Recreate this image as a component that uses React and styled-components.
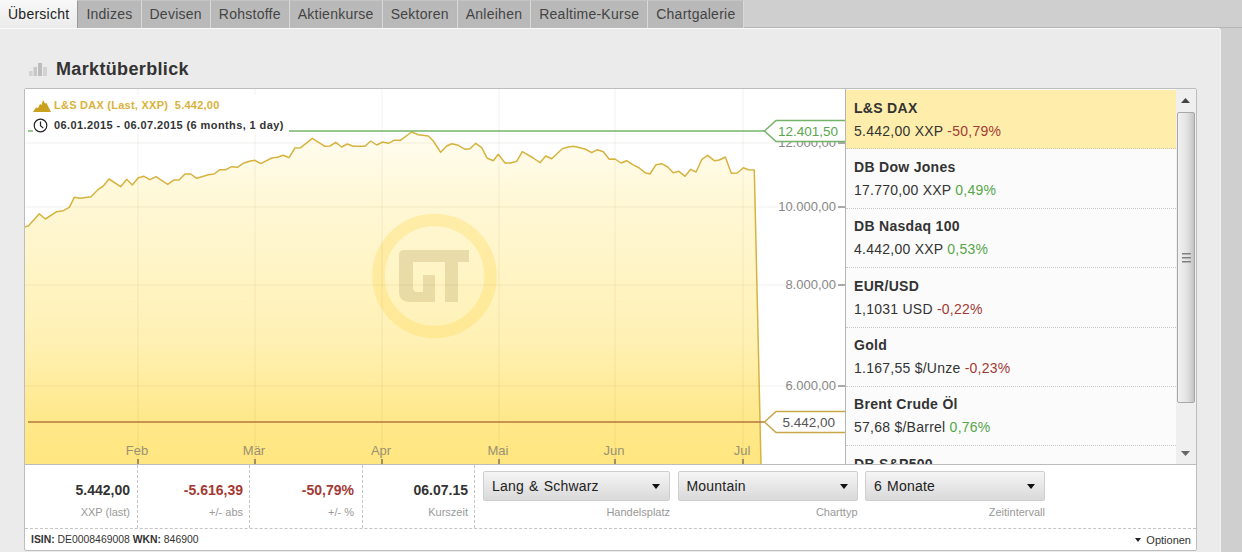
import React from "react";
import styled, { createGlobalStyle } from "styled-components";

const GlobalStyle = createGlobalStyle`
  html, body {
    margin: 0;
    height: 552px;
    overflow: hidden;
    background: #cfcfcf;
    font-family: "Liberation Sans", Arial, sans-serif;
  }
`;

const TABS = [
  "Übersicht",
  "Indizes",
  "Devisen",
  "Rohstoffe",
  "Aktienkurse",
  "Sektoren",
  "Anleihen",
  "Realtime-Kurse",
  "Chartgalerie",
];

const STATS = [
  { value: "5.442,00", label: "XXP (last)" },
  { value: "-5.616,39", label: "+/- abs", down: true },
  { value: "-50,79%", label: "+/- %", down: true },
  { value: "06.07.15", label: "Kurszeit" },
];

const SELECTS = [
  { value: "Lang & Schwarz", label: "Handelsplatz", width: 187 },
  { value: "Mountain", label: "Charttyp", width: 180 },
  { value: "6 Monate", label: "Zeitintervall", width: 180 },
];

const MARKETS = [
  { name: "L&S DAX", price: "5.442,00 XXP", change: "-50,79%", down: true, active: true },
  { name: "DB Dow Jones", price: "17.770,00 XXP", change: "0,49%" },
  { name: "DB Nasdaq 100", price: "4.442,00 XXP", change: "0,53%" },
  { name: "EUR/USD", price: "1,1031 USD", change: "-0,22%", down: true },
  { name: "Gold", price: "1.167,55 $/Unze", change: "-0,23%", down: true },
  { name: "Brent Crude Öl", price: "57,68 $/Barrel", change: "0,76%" },
  { name: "DB S&P500" },
];

const MONTHS = [
  { name: "Feb", x: 138 },
  { name: "Mär", x: 255 },
  { name: "Apr", x: 382 },
  { name: "Mai", x: 499 },
  { name: "Jun", x: 615 },
  { name: "Jul", x: 743 },
];

const LEVELS = [
  { name: "12.000,00", y: 143 },
  { name: "10.000,00", y: 207 },
  { name: "8.000,00", y: 285 },
  { name: "6.000,00", y: 386 },
];

// read off the reference, [x, y] in 3x crop units
const LEFT_CURVE = [
  [15, 320], [25, 318], [58, 281], [76, 297], [110, 275], [130, 272], [148, 262], [163, 232],
  [180, 235], [213, 230], [235, 208], [250, 198], [267, 177], [302, 200], [320, 178], [337, 195],
  [355, 173], [372, 169], [390, 179], [408, 170], [443, 193], [460, 181], [478, 179], [495, 162],
  [512, 162], [530, 175], [565, 164], [582, 162], [600, 149], [617, 149], [635, 140], [652, 142],
  [670, 130], [688, 124], [705, 121], [722, 131], [755, 114], [772, 112], [790, 106], [807, 113],
  [825, 84], [842, 83], [877, 55], [915, 79], [930, 78], [947, 67], [965, 81], [982, 72],
  [1000, 79], [1035, 79], [1052, 63], [1070, 75], [1088, 66], [1105, 70], [1122, 61], [1140, 61],
];
const RIGHT_CURVE = [
  [0, 62], [35, 36], [55, 44], [85, 48], [100, 63], [122, 97], [140, 78], [155, 71],
  [175, 76], [195, 88], [210, 86], [227, 70], [245, 83], [262, 115], [280, 122], [295, 103],
  [315, 129], [332, 129], [350, 124], [367, 95], [400, 114], [420, 128], [437, 108], [455, 116],
  [487, 86], [505, 81], [522, 79], [555, 87], [575, 98], [592, 89], [610, 95], [628, 118],
  [645, 117], [663, 129], [680, 122], [698, 134], [718, 144], [735, 158], [750, 162], [768, 134],
  [785, 131], [803, 141], [820, 158], [837, 154], [855, 169], [872, 148], [888, 156], [906, 118],
  [923, 106], [943, 122], [958, 120], [976, 111], [994, 160], [1012, 159], [1030, 143], [1045, 149],
  [1063, 150],
];

const round = (n) => Math.round(n * 10) / 10;
const curve = [
  [25, 226.7],
  ...LEFT_CURVE.map(([x, y]) => [round(20 + x / 3), round(120 + y / 3)]),
  ...RIGHT_CURVE.map(([x, y]) => [round(400 + x / 3), round(120 + y / 3)]),
  [761, 464],
]
  .map((p) => p.join(","))
  .join(" ");

const Chart = () => (
  <ChartSvg viewBox="25 89 820 375" width="820" height="375">
    <defs>
      <linearGradient id="mountainFill" x1="0" y1="131" x2="0" y2="464" gradientUnits="userSpaceOnUse">
        <stop offset="0" stopColor="#fffdf2" />
        <stop offset="0.19" stopColor="#fff8d8" />
        <stop offset="0.63" stopColor="#fff1b4" />
        <stop offset="0.87" stopColor="#ffe88a" />
        <stop offset="1" stopColor="#ffe680" />
      </linearGradient>
      <filter id="soft">
        <feGaussianBlur stdDeviation="0.6" />
      </filter>
    </defs>
    <polygon points={`${curve} 25,464`} fill="url(#mountainFill)" />

    <g filter="url(#soft)">
      <circle cx="434.5" cy="276" r="56" fill="none" stroke="#ffd95c" strokeOpacity="0.35" strokeWidth="12.5" />
      <path
        d="M404 250H469V262H458V302H445V262H413V287Q413 292 417 292H423V275H435V302H410Q399 302 399 291V255Q399 250 404 250Z"
        fill="#bfae6e"
        fillOpacity="0.34"
      />
    </g>

    {MONTHS.map((m) => (
      <GridLine key={m.name} x1={m.x} x2={m.x} y1="89" y2="464" />
    ))}
    {LEVELS.map((l) => (
      <GridLine key={l.name} x1="25" x2="838" y1={l.y} y2={l.y} />
    ))}

    <polyline points={curve} fill="none" stroke="#d6b33f" strokeWidth="1.5" strokeLinejoin="round" />

    {LEVELS.map((l) => (
      <g key={l.name}>
        <AxisText x="836" y={l.y + 4}>{l.name}</AxisText>
        <line x1="838" x2="845" y1={l.y} y2={l.y} stroke="#555" />
      </g>
    ))}
    {MONTHS.map((m) => (
      <g key={m.name}>
        <MonthText x={m.x - 1} y="455">{m.name}</MonthText>
        <line x1={m.x} x2={m.x} y1="459" y2="464" stroke="#444" />
      </g>
    ))}

    <line x1="28" x2="765" y1="131" y2="131" stroke="#74b36a" strokeWidth="1.5" />
    <path d="M845 120.5H776L764.5 131L776 141.5H845" fill="#fff" stroke="#74b36a" strokeWidth="1.5" />
    <TagText x="838" y="135.5" fill="#5aa64e">12.401,50</TagText>

    <line x1="28" x2="765" y1="422" y2="422" stroke="#b8763c" strokeWidth="1.5" />
    <path d="M845 411.5H776L764.5 422L776 432.5H845" fill="#fff" stroke="#c9a649" strokeWidth="1.5" />
    <TagText x="835" y="426.5" fill="#555">5.442,00</TagText>
  </ChartSvg>
);

const App = () => (
  <>
    <GlobalStyle />
    <Tabs>
      {TABS.map((tab, index) => (
        <Tab key={tab} $active={index === 0}>{tab}</Tab>
      ))}
    </Tabs>
    <Panel>
      <Heading>
        <svg width="18" height="14" viewBox="0 0 18 14">
          <rect x="0" y="9" width="3.5" height="5" fill="#d2d2d2" />
          <rect x="4.5" y="5" width="3.5" height="9" fill="#c8c8c8" />
          <rect x="9" y="1" width="4" height="13" fill="#bdbdbd" />
          <rect x="14" y="5" width="4" height="9" fill="#d2d2d2" />
        </svg>
        <Title>Marktüberblick</Title>
      </Heading>
      <Box>
        <TopRow>
          <ChartArea>
            <Chart />
            <Legend>
              <LegendRow $color="#d9b23a" $spacing={0.25}>
                <LegendIcon>
                  <svg width="18" height="13" viewBox="0 0 18 13">
                    <path d="M0 13L3 8.5L5 9L7 5L8.5 6L10 1L12 4.5L13.5 4L18 13Z" fill="#c9a11f" />
                  </svg>
                </LegendIcon>
                L&amp;S DAX (Last, XXP)&nbsp; 5.442,00
              </LegendRow>
              <LegendRow $color="#333" $spacing={0.4}>
                <LegendIcon>
                  <svg width="15" height="15" viewBox="0 0 15 15">
                    <circle cx="7.5" cy="7.5" r="6.3" fill="none" stroke="#222" strokeWidth="1.2" />
                    <path d="M7.5 3.5V7.8L10.3 10.1" fill="none" stroke="#222" strokeWidth="1.2" />
                  </svg>
                </LegendIcon>
                06.01.2015 - 06.07.2015 (6 months, 1 day)
              </LegendRow>
            </Legend>
          </ChartArea>
          <MarketList>
            {MARKETS.map((m) => (
              <Market key={m.name} $active={m.active}>
                <MarketName>{m.name}</MarketName>
                {m.price && (
                  <MarketPrice>
                    {m.price} <Change $down={m.down}>{m.change}</Change>
                  </MarketPrice>
                )}
              </Market>
            ))}
          </MarketList>
          <Scrollbar>
            <ScrollArrow>
              <svg width="9" height="5" viewBox="0 0 9 5"><path d="M4.5 0L9 5H0Z" fill="#444" /></svg>
            </ScrollArrow>
            <Thumb>
              <Grip />
              <Grip />
              <Grip />
            </Thumb>
            <ScrollArrow $bottom>
              <svg width="9" height="5" viewBox="0 0 9 5"><path d="M0 0H9L4.5 5Z" fill="#666" /></svg>
            </ScrollArrow>
          </Scrollbar>
        </TopRow>
        <StatsRow>
          {STATS.map((s) => (
            <Stat key={s.label}>
              <StatValue $down={s.down}>{s.value}</StatValue>
              <SmallLabel>{s.label}</SmallLabel>
            </Stat>
          ))}
          <Controls>
            {SELECTS.map((s) => (
              <Control key={s.label} $width={s.width}>
                <Select>
                  <span>{s.value}</span>
                  <Caret />
                </Select>
                <SmallLabel>{s.label}</SmallLabel>
              </Control>
            ))}
          </Controls>
        </StatsRow>
        <Footer>
          <Codes>
            <b>ISIN:</b> DE0008469008 <b>WKN:</b> 846900
          </Codes>
          <Options>
            <SmallCaret />
            <span>Optionen</span>
          </Options>
        </Footer>
      </Box>
    </Panel>
  </>
);

export default App;

const Tabs = styled.div`
  display: flex;
  height: 27px;
  border-bottom: 1px solid #b5b5b5;
`;

const Tab = styled.div`
  height: 28px;
  box-sizing: border-box;
  padding: 0 8px;
  font-size: 14px;
  letter-spacing: 0.25px;
  line-height: 27px;
  color: ${(p) => (p.$active ? "#222" : "#444")};
  background: ${(p) => (p.$active ? "linear-gradient(#f8f8f8, #ebebeb)" : "#b9b9b9")};
  border-top: 1px solid ${(p) => (p.$active ? "#f8f8f8" : "#c4c4c4")};
  border-right: 1px solid ${(p) => (p.$active ? "#999" : "#d8d8d8")};
  position: relative;
  z-index: 1;
`;

const Panel = styled.div`
  width: 1221px;
  height: 524px;
  box-sizing: border-box;
  padding-top: 28px;
  background: #ebebeb;
  border-top: 1px solid #fafafa;
  border-right: 1px solid #f4f4f4;
  border-top-right-radius: 3px;
`;

const Heading = styled.div`
  display: flex;
  align-items: center;
  gap: 9px;
  height: 24px;
  margin: 0 0 7px 29px;
`;

const Title = styled.h2`
  margin: 0;
  font-size: 18px;
  font-weight: bold;
  letter-spacing: 0.35px;
  color: #333;
`;

const Box = styled.div`
  width: 1171px;
  margin-left: 24px;
  background: #fff;
  border: 1px solid #bdbdbd;
  border-radius: 2px;
`;

const TopRow = styled.div`
  display: flex;
  height: 375px;
  border-bottom: 1px solid #bdbdbd;
`;

const ChartArea = styled.div`
  position: relative;
  width: 820px;
  flex: none;
  background: #fff;
`;

const ChartSvg = styled.svg`
  display: block;
`;

const GridLine = styled.line`
  stroke: rgba(90, 70, 20, 0.07);
  stroke-width: 1;
`;

const AxisText = styled.text`
  font-size: 13px;
  fill: #888;
  text-anchor: end;
`;

const MonthText = styled.text`
  font-size: 13px;
  fill: #9a9172;
  text-anchor: middle;
`;

const TagText = styled.text`
  font-size: 13.5px;
  text-anchor: end;
`;

const Legend = styled.div`
  position: absolute;
  left: 8px;
  top: 6px;
  width: 256px;
  height: 39px;
  background: #fff;
`;

const LegendRow = styled.div`
  display: flex;
  align-items: center;
  height: 20px;
  font-size: 11px;
  font-weight: bold;
  letter-spacing: ${(p) => p.$spacing}px;
  white-space: nowrap;
  color: ${(p) => p.$color};
`;

const LegendIcon = styled.span`
  display: flex;
  width: 21px;
  flex: none;
`;

const MarketList = styled.div`
  width: 330px;
  flex: none;
  overflow: hidden;
  padding-top: 1px;
  background: #fbfbfb;
  border-left: 1px solid #b5b5b5;
`;

const Market = styled.div`
  height: 59.4px;
  box-sizing: border-box;
  padding: 6.5px 0 0 8px;
  background: ${(p) => (p.$active ? "#ffeeab" : "transparent")};
  border-bottom: 1px dotted #c8c8c8;
  line-height: 23px;
  font-size: 14px;
  color: #333;
`;

const MarketName = styled.div`
  font-weight: bold;
  letter-spacing: 0.3px;
`;

const MarketPrice = styled.div`
  white-space: nowrap;
  letter-spacing: 0.25px;
`;

const Change = styled.span`
  color: ${(p) => (p.$down ? "#a33a34" : "#55a648")};
`;

const Scrollbar = styled.div`
  flex: 1;
  display: flex;
  flex-direction: column;
  background: #efefef;
`;

const ScrollArrow = styled.div`
  height: ${(p) => (p.$bottom ? "22px" : "23px")};
  display: flex;
  align-items: center;
  justify-content: center;
  margin-top: ${(p) => (p.$bottom ? "auto" : "0")};
  padding-right: 1px;
`;

const Thumb = styled.div`
  height: 291px;
  box-sizing: border-box;
  margin: 0 1px;
  display: flex;
  flex-direction: column;
  align-items: center;
  justify-content: center;
  gap: 2px;
  border: 1px solid #a8a8a8;
  border-radius: 2px;
  background: linear-gradient(90deg, #f1f1f1, #e2e2e2 55%, #c4c4c4);
`;

const Grip = styled.div`
  width: 9px;
  height: 2px;
  background: linear-gradient(#666, #ccc);
`;

const StatsRow = styled.div`
  display: flex;
  height: 63px;
  border-bottom: 1px dashed #c4c4c4;
`;

const Stat = styled.div`
  width: 112px;
  flex: none;
  box-sizing: border-box;
  padding: 16px 6px 0 0;
  text-align: right;
  border-right: 1px dashed #c4c4c4;

  &:first-child {
    width: 113px;
    padding-right: 7px;
  }

  &:nth-child(3) {
    width: 113px;
    padding-right: 8px;
  }
`;

const StatValue = styled.div`
  font-size: 14px;
  font-weight: bold;
  line-height: 18px;
  color: ${(p) => (p.$down ? "#a33a34" : "#333")};
  margin-bottom: 6px;
`;

const SmallLabel = styled.div`
  font-size: 11px;
  line-height: 14px;
  color: #999;
  text-align: right;
`;

const Controls = styled.div`
  display: flex;
  gap: 7.5px;
  padding: 6px 0 0 8px;
`;

const Control = styled.div`
  width: ${(p) => p.$width}px;
`;

const Select = styled.div`
  height: 30px;
  box-sizing: border-box;
  display: flex;
  align-items: center;
  justify-content: space-between;
  padding: 0 9px 0 8px;
  margin-bottom: 4px;
  font-size: 14px;
  word-spacing: 1px;
  letter-spacing: 0.2px;
  color: #222;
  background: linear-gradient(#f5f5f5, #d9d9d9);
  border: 1px solid #cfcfcf;
  border-radius: 2px;
`;

const Caret = styled.span`
  width: 0;
  height: 0;
  border-left: 4.5px solid transparent;
  border-right: 4.5px solid transparent;
  border-top: 5px solid #111;
`;

const Footer = styled.div`
  display: flex;
  align-items: center;
  justify-content: space-between;
  height: 21px;
  padding: 0 5px 0 6px;
  font-size: 11px;
  color: #333;
`;

const Codes = styled.span`
  font-size: 10.4px;
`;

const Options = styled.span`
  display: flex;
  align-items: center;
  gap: 5px;
`;

const SmallCaret = styled.span`
  width: 0;
  height: 0;
  border-left: 3.5px solid transparent;
  border-right: 3.5px solid transparent;
  border-top: 4px solid #222;
`;
